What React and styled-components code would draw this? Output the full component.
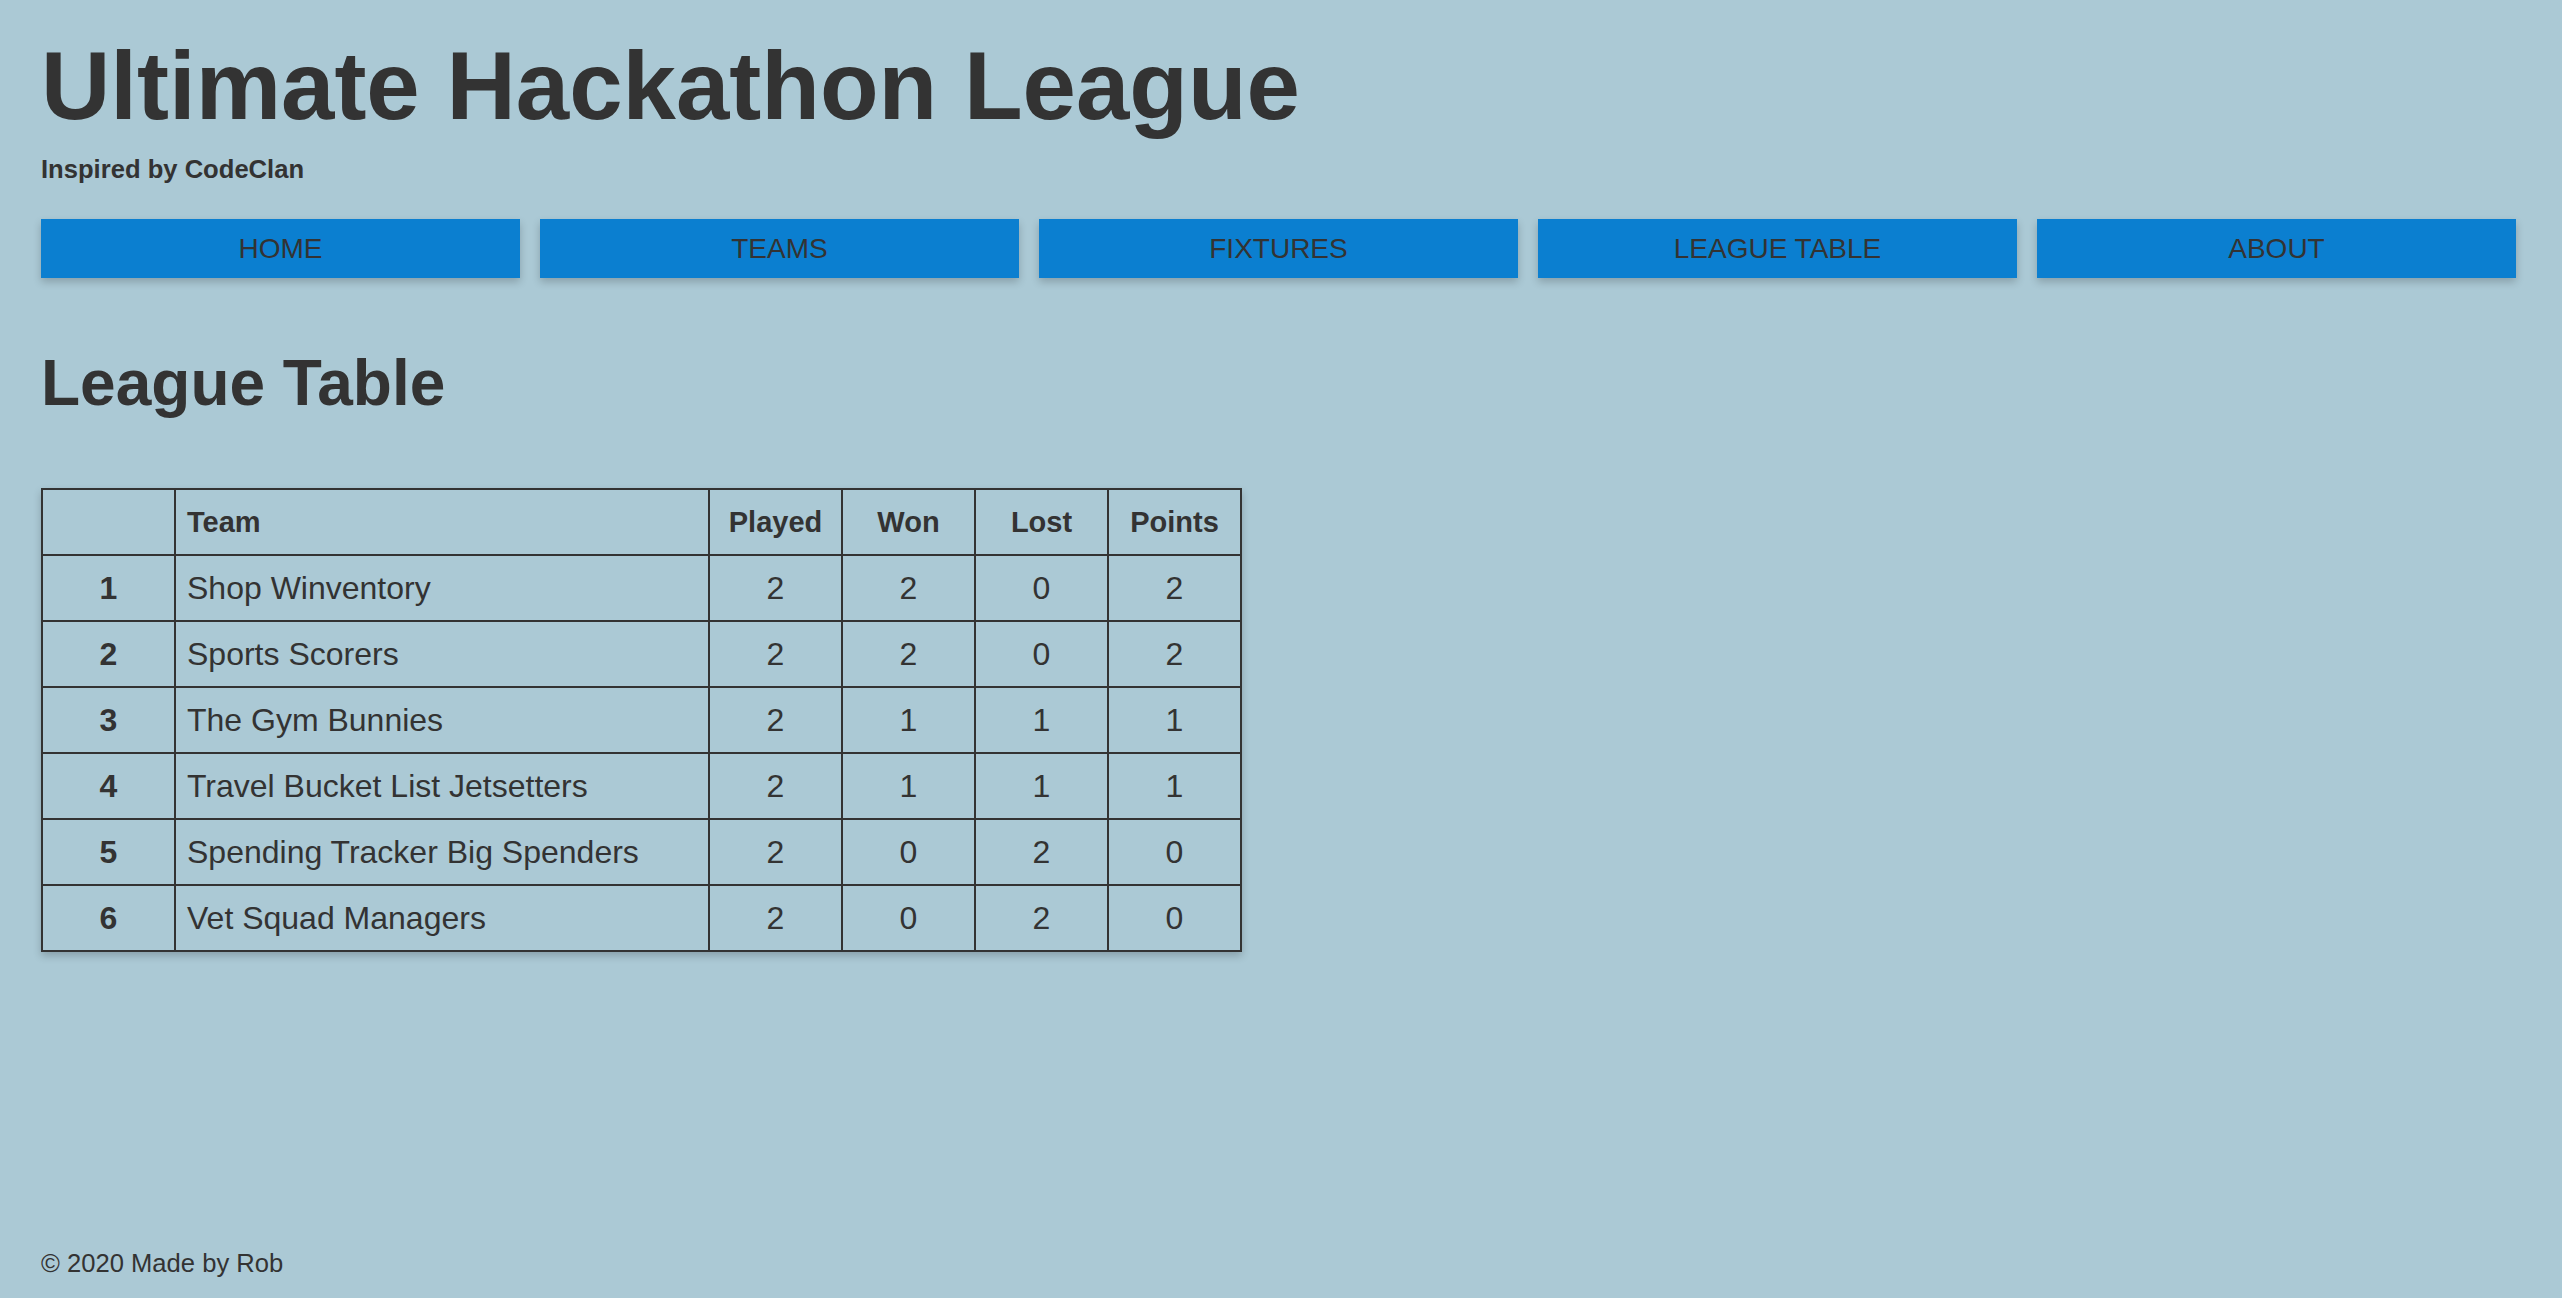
import React from "react";
import styled, { createGlobalStyle } from "styled-components";

const GlobalStyle = createGlobalStyle`
  * {
    box-sizing: border-box;
  }
  body {
    margin: 0;
    background-color: #abc9d5;
    color: #333333;
    font-family: "Liberation Sans", Arial, sans-serif;
  }
`;

const teams = [
  { name: "Shop Winventory", played: 2, won: 2, lost: 0, points: 2 },
  { name: "Sports Scorers", played: 2, won: 2, lost: 0, points: 2 },
  { name: "The Gym Bunnies", played: 2, won: 1, lost: 1, points: 1 },
  { name: "Travel Bucket List Jetsetters", played: 2, won: 1, lost: 1, points: 1 },
  { name: "Spending Tracker Big Spenders", played: 2, won: 0, lost: 2, points: 0 },
  { name: "Vet Squad Managers", played: 2, won: 0, lost: 2, points: 0 },
];

const links = ["HOME", "TEAMS", "FIXTURES", "LEAGUE TABLE", "ABOUT"];

const App = () => {
  return (
    <>
      <GlobalStyle />
      <Page>
        <Header>
          <Title>Ultimate Hackathon League</Title>
          <Subtitle>Inspired by CodeClan</Subtitle>
        </Header>
        <Nav>
          {links.map((link) => (
            <NavButton key={link}>{link}</NavButton>
          ))}
        </Nav>
        <Main>
          <Heading>League Table</Heading>
          <Table>
            <colgroup>
              <col style={{ width: 133 }} />
              <col style={{ width: 534 }} />
              <col style={{ width: 133 }} />
              <col style={{ width: 133 }} />
              <col style={{ width: 133 }} />
              <col style={{ width: 133 }} />
            </colgroup>
            <thead>
              <tr>
                <HeadCell />
                <HeadCell $left>Team</HeadCell>
                <HeadCell>Played</HeadCell>
                <HeadCell>Won</HeadCell>
                <HeadCell>Lost</HeadCell>
                <HeadCell>Points</HeadCell>
              </tr>
            </thead>
            <tbody>
              {teams.map((team, i) => (
                <tr key={team.name}>
                  <Cell $bold>{i + 1}</Cell>
                  <Cell $left>{team.name}</Cell>
                  <Cell>{team.played}</Cell>
                  <Cell>{team.won}</Cell>
                  <Cell>{team.lost}</Cell>
                  <Cell>{team.points}</Cell>
                </tr>
              ))}
            </tbody>
          </Table>
        </Main>
        <Footer>© 2020 Made by Rob</Footer>
      </Page>
    </>
  );
};

const Page = styled.div`
  display: flex;
  flex-direction: column;
  min-height: 100vh;
  padding: 31px 46px 20px 41px;
`;

const Header = styled.header`
  display: flex;
  flex-direction: column;
`;

const Title = styled.h1`
  margin: 0;
  font-size: 96px;
  font-weight: bold;
`;

const Subtitle = styled.h4`
  margin: 14px 0 0;
  font-size: 25.6px;
  font-weight: bold;
`;

const Nav = styled.nav`
  display: flex;
  gap: 20px;
  margin-top: 35px;
`;

const NavButton = styled.a`
  flex: 1;
  height: 59px;
  display: flex;
  align-items: center;
  justify-content: center;
  background-color: #0b7fd0;
  color: #333333;
  font-size: 28px;
  box-shadow: 0 4px 8px 0 rgba(0, 0, 0, 0.2);
  cursor: pointer;
`;

const Main = styled.main`
  display: flex;
  flex-direction: column;
  align-items: flex-start;
`;

const Heading = styled.h2`
  margin: 68px 0 0;
  font-size: 64px;
  font-weight: bold;
`;

const Table = styled.table`
  margin-top: 68px;
  width: 1201px;
  table-layout: fixed;
  border-collapse: separate;
  border-spacing: 0;
  border: 1px solid #333333;
  box-shadow: 0 4px 8px 0 rgba(0, 0, 0, 0.2);
`;

const HeadCell = styled.th`
  height: 66px;
  padding: 0 11px;
  border: 1px solid #333333;
  font-size: 29px;
  font-weight: bold;
  text-align: ${(p) => (p.$left ? "left" : "center")};
  vertical-align: middle;
`;

const Cell = styled.td`
  height: 66px;
  padding: 0 11px;
  border: 1px solid #333333;
  font-size: 32px;
  font-weight: ${(p) => (p.$bold ? "bold" : "normal")};
  text-align: ${(p) => (p.$left ? "left" : "center")};
  vertical-align: middle;
  white-space: nowrap;
`;

const Footer = styled.footer`
  margin-top: auto;
  font-size: 25.6px;
`;

export default App;
